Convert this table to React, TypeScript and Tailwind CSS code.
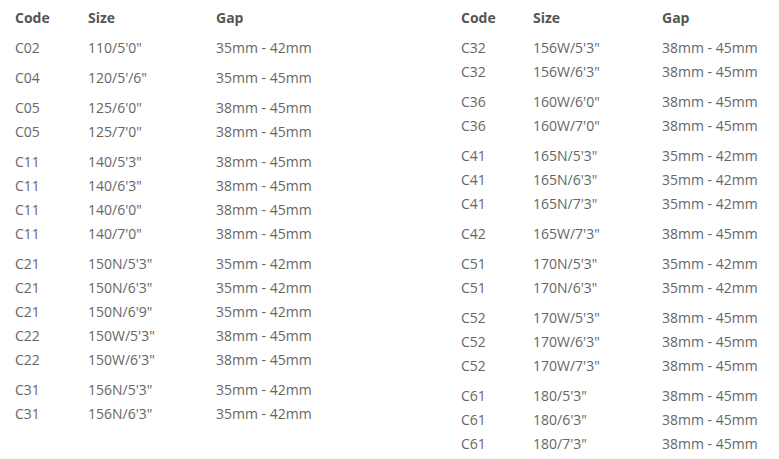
import React from "react";

type Row = [string, string, string];

const left: Row[][] = [
  [["C02", `110/5'0"`, "35mm - 42mm"]],
  [["C04", `120/5'/6"`, "35mm - 45mm"]],
  [
    ["C05", `125/6'0"`, "38mm - 45mm"],
    ["C05", `125/7'0"`, "38mm - 45mm"],
  ],
  [
    ["C11", `140/5'3"`, "38mm - 45mm"],
    ["C11", `140/6'3"`, "38mm - 45mm"],
    ["C11", `140/6'0"`, "38mm - 45mm"],
    ["C11", `140/7'0"`, "38mm - 45mm"],
  ],
  [
    ["C21", `150N/5'3"`, "35mm - 42mm"],
    ["C21", `150N/6'3"`, "35mm - 42mm"],
    ["C21", `150N/6'9"`, "35mm - 42mm"],
    ["C22", `150W/5'3"`, "38mm - 45mm"],
    ["C22", `150W/6'3"`, "38mm - 45mm"],
  ],
  [
    ["C31", `156N/5'3"`, "35mm - 42mm"],
    ["C31", `156N/6'3"`, "35mm - 42mm"],
  ],
];

const right: Row[][] = [
  [
    ["C32", `156W/5'3"`, "38mm - 45mm"],
    ["C32", `156W/6'3"`, "38mm - 45mm"],
  ],
  [
    ["C36", `160W/6'0"`, "38mm - 45mm"],
    ["C36", `160W/7'0"`, "38mm - 45mm"],
  ],
  [
    ["C41", `165N/5'3"`, "35mm - 42mm"],
    ["C41", `165N/6'3"`, "35mm - 42mm"],
    ["C41", `165N/7'3"`, "35mm - 42mm"],
  ],
  [["C42", `165W/7'3"`, "38mm - 45mm"]],
  [
    ["C51", `170N/5'3"`, "35mm - 42mm"],
    ["C51", `170N/6'3"`, "35mm - 42mm"],
  ],
  [
    ["C52", `170W/5'3"`, "38mm - 45mm"],
    ["C52", `170W/6'3"`, "38mm - 45mm"],
    ["C52", `170W/7'3"`, "38mm - 45mm"],
  ],
  [
    ["C61", `180/5'3"`, "38mm - 45mm"],
    ["C61", `180/6'3"`, "38mm - 45mm"],
    ["C61", `180/7'3"`, "38mm - 45mm"],
  ],
];

function SizeTable({ groups, codeW, sizeW }: { groups: Row[][]; codeW: string; sizeW: string }) {
  return (
    <div className="flex flex-col gap-[6px]">
      <div className="flex h-6 items-center font-bold text-[#555555]">
        <div className={codeW}>Code</div>
        <div className={sizeW}>Size</div>
        <div>Gap</div>
      </div>
      {groups.map((g, i) => (
        <div key={i} className="flex flex-col">
          {g.map((r, j) => (
            <div key={j} className="flex h-6 items-center">
              <div className={codeW}>{r[0]}</div>
              <div className={sizeW}>{r[1]}</div>
              <div>{r[2]}</div>
            </div>
          ))}
        </div>
      ))}
    </div>
  );
}

export default function App() {
  return (
    <div
      className="w-[779px] h-[459px] bg-white text-[14px] text-[#666666] flex pt-[5px]"
      style={{ fontFamily: '"Open Sans", sans-serif' }}
    >
      <div className="w-[461px] pl-[15px]">
        <SizeTable groups={left} codeW="w-[73px]" sizeW="w-[128px]" />
      </div>
      <div>
        <SizeTable groups={right} codeW="w-[72px]" sizeW="w-[129px]" />
      </div>
    </div>
  );
}
